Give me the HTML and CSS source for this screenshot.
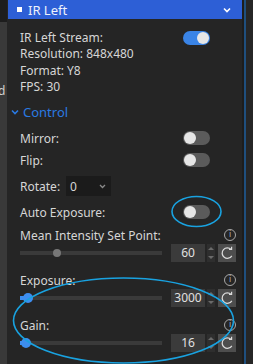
FILE: index.html
```html
<!DOCTYPE html>
<html lang="en">
<head>
  <meta charset="UTF-8">
  <title>IR Left</title>
  <link rel="stylesheet" href="styles.css">
</head>
<body>

  <div class="side-left">
    <div class="side-top"></div>
    <div class="side-text">d</div>
  </div>

  <div class="panel">
    <div class="header">
      <span class="square"></span>
      <span class="title">IR Left</span>
      <svg class="chev" width="8" height="6" viewBox="0 0 8 6"><path d="M1 1.5 L4 4.5 L7 1.5" fill="none" stroke="#fff" stroke-width="1.6"/></svg>
    </div>

    <div class="content">
      <div class="info">
        <div class="line">IR Left Stream:<span class="toggle on"><span class="knob"></span></span></div>
        <div class="line">Resolution: 848x480</div>
        <div class="line">Format: Y8</div>
        <div class="line">FPS: 30</div>
      </div>

      <div class="section">
        <svg width="8" height="6" viewBox="0 0 8 6"><path d="M1 1.5 L4 4.5 L7 1.5" fill="none" stroke="#2a7ae2" stroke-width="1.6"/></svg>
        <span>Control</span>
      </div>

      <div class="row">Mirror:<span class="toggle"><span class="knob"></span></span></div>
      <div class="row">Flip:<span class="toggle"><span class="knob"></span></span></div>
      <div class="row rotate">Rotate:
        <div class="select"><span>0</span>
          <svg width="7" height="5" viewBox="0 0 7 5"><path d="M1 1 L3.5 3.5 L6 1" fill="none" stroke="#8a8a8a" stroke-width="1.3"/></svg>
        </div>
      </div>
      <div class="row">Auto Exposure:<span class="toggle"><span class="knob"></span></span></div>

      <div class="group">
        <div class="label">Mean Intensity Set Point:<span class="info-ic">i</span></div>
        <div class="ctrl">
          <div class="track"><span class="thumb grey" style="left: 37px"></span></div>
          <div class="num">60</div>
          <div class="spin"><span class="up"></span><span class="down"></span></div>
          <div class="reset"><svg width="14" height="14" viewBox="0 0 14 14"><path d="M11.2 3.6 A5.2 5.2 0 1 0 11.8 9.8" fill="none" stroke="#dcdcdc" stroke-width="1.3"/><path d="M9 3.4 L11.6 3.4 L11.6 0.8" fill="none" stroke="#dcdcdc" stroke-width="1.2"/></svg></div>
        </div>
      </div>

      <div class="group">
        <div class="label">Exposure:<span class="info-ic">i</span></div>
        <div class="ctrl">
          <div class="track"><span class="fill" style="width: 8px"></span><span class="thumb" style="left: 8px"></span></div>
          <div class="num">3000</div>
          <div class="spin"><span class="up"></span><span class="down"></span></div>
          <div class="reset"><svg width="14" height="14" viewBox="0 0 14 14"><path d="M11.2 3.6 A5.2 5.2 0 1 0 11.8 9.8" fill="none" stroke="#dcdcdc" stroke-width="1.3"/><path d="M9 3.4 L11.6 3.4 L11.6 0.8" fill="none" stroke="#dcdcdc" stroke-width="1.2"/></svg></div>
        </div>
      </div>

      <div class="group">
        <div class="label">Gain:<span class="info-ic">i</span></div>
        <div class="ctrl">
          <div class="track"><span class="fill" style="width: 6px"></span><span class="thumb" style="left: 6px"></span></div>
          <div class="num">16</div>
          <div class="spin"><span class="up"></span><span class="down"></span></div>
          <div class="reset"><svg width="14" height="14" viewBox="0 0 14 14"><path d="M11.2 3.6 A5.2 5.2 0 1 0 11.8 9.8" fill="none" stroke="#dcdcdc" stroke-width="1.3"/><path d="M9 3.4 L11.6 3.4 L11.6 0.8" fill="none" stroke="#dcdcdc" stroke-width="1.2"/></svg></div>
        </div>
      </div>
    </div>
  </div>

  <div class="side-right"></div>

  <!-- marcas de anotacion -->
  <svg class="marks" width="253" height="364" viewBox="0 0 253 364">
    <ellipse cx="196.5" cy="211.5" rx="24.5" ry="15" fill="none" stroke="#19a2e0" stroke-width="1.6"/>
    <ellipse cx="123.5" cy="320.5" rx="110" ry="42.5" fill="none" stroke="#19a2e0" stroke-width="1.6"/>
  </svg>

</body>
</html>
```

FILE: styles.css
```css
html, body {
  margin: 0;
  padding: 0;
}
body {
  width: 253px;
  height: 364px;
  overflow: hidden;
  background: #262626;
  font-family: "Noto Sans", "Open Sans", sans-serif;
  font-size: 12px;
  color: #d6d6d6;
  display: flex;
  position: relative;
}

.side-left {
  width: 7px;
  background: #393939;
  overflow: hidden;
}
.side-top {
  height: 22px;
  background: #1d1d1d;
}
.side-text {
  margin-top: 61px;
  margin-left: -2px;
  color: #cfcfcf;
  line-height: 16px;
}

.panel {
  width: 234px;
  padding-left: 1px;
  background: #252525;
}
.side-right {
  width: 11px;
  display: flex;
}
.side-right::before {
  content: "";
  width: 2px;
  background: #1d1d1d;
}
.side-right::after {
  content: "";
  width: 2px;
  margin-right: 7px;
  background: #1f4f7e;
}

.header {
  height: 19px;
  background: #2d5fd6;
  display: flex;
  align-items: center;
  color: #eef2fc;
  font-size: 13px;
}
.square {
  width: 5px;
  height: 5px;
  background: #fff;
  margin-left: 9px;
  margin-right: 6px;
}
.title {
  flex: 1;
}
.chev {
  margin-right: 11px;
}

.content {
  padding: 11px 4px 0 12px;
}
.line {
  line-height: 16.3px;
  height: 16.3px;
  display: flex;
  align-items: center;
}

.toggle {
  width: 27px;
  height: 14px;
  border-radius: 7px;
  background: #5b5b5b;
  margin-left: auto;
  margin-right: 28px;
  display: flex;
  align-items: center;
  padding: 0 1px;
  box-sizing: border-box;
}
.toggle .knob {
  width: 12px;
  height: 12px;
  border-radius: 50%;
  background: #e6e6e6;
}
.toggle.on {
  background: #3a84e6;
  justify-content: flex-end;
}

.section {
  margin-top: 9px;
  margin-left: -9px;
  height: 16px;
  display: flex;
  align-items: center;
  gap: 4px;
  color: #2a7ae2;
  font-size: 13px;
}

.row {
  height: 22px;
  display: flex;
  align-items: center;
}
.row:first-of-type {
  margin-top: 7px;
}
.section + .row {
  margin-top: 7px;
}
.rotate {
  height: 30px;
}
.select {
  width: 45px;
  height: 20px;
  background: #1b1b1b;
  margin-left: 6px;
  display: flex;
  align-items: center;
  justify-content: space-between;
  padding: 0 5px 0 4px;
  box-sizing: border-box;
}

.group {
  margin-top: 3px;
  margin-bottom: 9px;
}
.group + .group {
  margin-top: 0;
}
.label {
  height: 18px;
  display: flex;
  align-items: center;
}
.info-ic {
  margin-left: auto;
  margin-right: 2px;
  width: 10px;
  height: 10px;
  border: 1px solid #a8a8a8;
  border-radius: 50%;
  font-size: 8px;
  line-height: 10px;
  text-align: center;
  color: #b8b8b8;
  font-family: "DejaVu Sans", sans-serif;
}

.ctrl {
  height: 18px;
  display: flex;
  align-items: center;
}
.track {
  width: 142px;
  height: 4px;
  background: #3a3a3a;
  position: relative;
  margin-right: 9px;
}
.fill {
  position: absolute;
  left: 0;
  top: 0;
  height: 4px;
  background: #3d8ef0;
}
.thumb {
  position: absolute;
  top: -3px;
  width: 10px;
  height: 10px;
  margin-left: -5px;
  border-radius: 50%;
  background: #3d8ef0;
}
.thumb.grey {
  top: -2px;
  width: 8px;
  height: 8px;
  margin-left: -4px;
  background: #777;
}
.num {
  width: 34px;
  height: 18px;
  background: #3b3b3b;
  text-align: center;
  line-height: 18px;
  color: #e0e0e0;
  font-size: 12px;
}
.spin {
  width: 8px;
  height: 18px;
  margin-left: 2px;
  background: #2e2e2e;
  display: flex;
  flex-direction: column;
  align-items: center;
  justify-content: space-around;
}
.spin .up {
  border-left: 3px solid transparent;
  border-right: 3px solid transparent;
  border-bottom: 3px solid #6a6a6a;
}
.spin .down {
  border-left: 3px solid transparent;
  border-right: 3px solid transparent;
  border-top: 3px solid #6a6a6a;
}
.reset {
  width: 18px;
  height: 18px;
  margin-left: 3px;
  background: #4d4d4d;
  display: flex;
  align-items: center;
  justify-content: center;
}

.marks {
  position: absolute;
  left: 0;
  top: 0;
  pointer-events: none;
}
```
